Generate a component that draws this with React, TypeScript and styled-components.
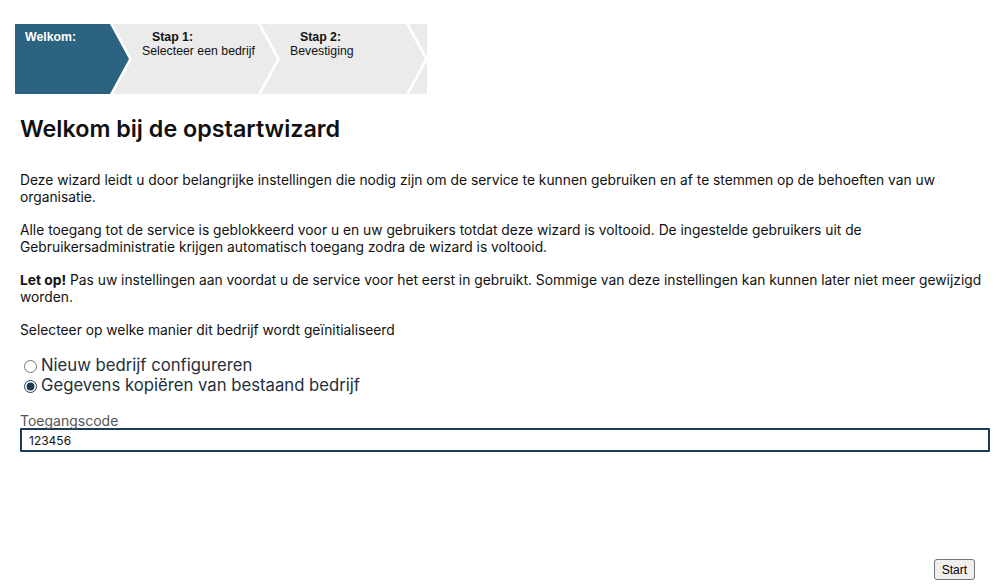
import React, { useState } from "react";
import styled, { createGlobalStyle } from "styled-components";

const GlobalStyle = createGlobalStyle`
  body {
    margin: 8px;
    background: #ffffff;
    font-family: Inter, "Noto Sans", sans-serif;
    color: #111111;
  }
`;

const Page = styled.div`
  display: flex;
  flex-direction: column;
  min-height: 572px;
`;

const StepBar = styled.div`
  display: flex;
  height: 70px;
  margin: 16px 0 0 7px;
`;

const Step = styled.div<{ $first?: boolean; $active?: boolean; $w: number }>`
  flex: none;
  width: ${(p) => p.$w}px;
  margin-left: ${(p) => (p.$first ? 0 : -16)}px;
  padding: 6px 0 0 ${(p) => (p.$first ? 10 : 29)}px;
  box-sizing: border-box;
  background: ${(p) => (p.$active ? "#2b6380" : "#ebebeb")};
  color: ${(p) => (p.$active ? "#ffffff" : "#111111")};
  font-family: "Liberation Sans", Arial, sans-serif;
  font-size: 12.3px;
  line-height: 14px;
  clip-path: ${(p) =>
    p.$first
      ? "polygon(0 0, calc(100% - 19px) 0, 100% 50%, calc(100% - 19px) 100%, 0 100%)"
      : "polygon(0 0, calc(100% - 19px) 0, 100% 50%, calc(100% - 19px) 100%, 0 100%, 19px 50%)"};
`;

const StepTitle = styled.div<{ $indent?: boolean }>`
  font-weight: bold;
  padding-left: ${(p) => (p.$indent ? 10 : 0)}px;
`;

const Tail = styled.div`
  flex: none;
  width: 18px;
  margin-left: -16px;
  background: #ebebeb;
  clip-path: polygon(0 0, 100% 0, 100% 100%, 0 100%, 19px 50%);
`;

const Content = styled.div`
  padding: 0 0 0 12px;
`;

const Title = styled.h1`
  margin: 21px 0 29px;
  font-size: 23.3px;
  font-weight: 600;
  line-height: 28px;
`;

const Text = styled.p`
  margin: 0 0 16px;
  font-size: 13.8px;
  line-height: 17px;
`;

const Options = styled.div`
  display: flex;
  flex-direction: column;
  margin: 16px 0 18px;
`;

const Option = styled.label`
  display: flex;
  align-items: center;
  font-size: 16.7px;
  line-height: 20px;
  color: #1f2f3e;
  input {
    margin: 2px 4px 0 4px;
    accent-color: #1e3a50;
  }
`;

const FieldLabel = styled.div`
  font-size: 14px;
  line-height: 15px;
  color: #555555;
`;

const Input = styled.input`
  display: block;
  width: 100%;
  box-sizing: border-box;
  height: 24px;
  padding: 0 7px;
  border: 2px solid #1c3c55;
  border-radius: 1px;
  font-family: Inter, sans-serif;
  font-size: 12px;
  color: #111111;
  outline: none;
`;

const Footer = styled.div`
  display: flex;
  justify-content: flex-end;
  margin-top: auto;
  padding-right: 15px;
`;

const Button = styled.button`
  font-family: "Liberation Sans", Arial, sans-serif;
  font-size: 12px;
  padding: 3px 7px;
  height: 21px;
  background: #efefef;
  border: 1px solid #767676;
  border-radius: 3px;
  color: #000000;
`;

export default function App() {
  const [mode, setMode] = useState("copy");
  const [code, setCode] = useState("123456");
  return (
    <Page>
      <GlobalStyle />
      <StepBar>
        <Step $first $active $w={114}>
          <StepTitle>Welkom:</StepTitle>
        </Step>
        <Step $w={164}>
          <StepTitle $indent>Stap 1:</StepTitle>
          <div>Selecteer een bedrijf</div>
        </Step>
        <Step $w={164}>
          <StepTitle $indent>Stap 2:</StepTitle>
          <div>Bevestiging</div>
        </Step>
        <Tail />
      </StepBar>
      <Content>
        <Title>Welkom bij de opstartwizard</Title>
        <Text>
          Deze wizard leidt u door belangrijke instellingen die nodig zijn om de service te kunnen
          gebruiken en af te stemmen op de behoeften van uw organisatie.
        </Text>
        <Text>
          Alle toegang tot de service is geblokkeerd voor u en uw gebruikers totdat deze wizard is
          voltooid. De ingestelde gebruikers uit de Gebruikersadministratie krijgen automatisch
          toegang zodra de wizard is voltooid.
        </Text>
        <Text>
          <b>Let op!</b> Pas uw instellingen aan voordat u de service voor het eerst in gebruikt.
          Sommige van deze instellingen kan kunnen later niet meer gewijzigd worden.
        </Text>
        <Text>Selecteer op welke manier dit bedrijf wordt geïnitialiseerd</Text>
        <Options>
          <Option>
            <input
              type="radio"
              name="mode"
              checked={mode === "new"}
              onChange={() => setMode("new")}
            />
            Nieuw bedrijf configureren
          </Option>
          <Option>
            <input
              type="radio"
              name="mode"
              checked={mode === "copy"}
              onChange={() => setMode("copy")}
            />
            Gegevens kopiëren van bestaand bedrijf
          </Option>
        </Options>
        <FieldLabel>Toegangscode</FieldLabel>
        <Input value={code} onChange={(e) => setCode(e.target.value)} />
      </Content>
      <Footer>
        <Button>Start</Button>
      </Footer>
    </Page>
  );
}
